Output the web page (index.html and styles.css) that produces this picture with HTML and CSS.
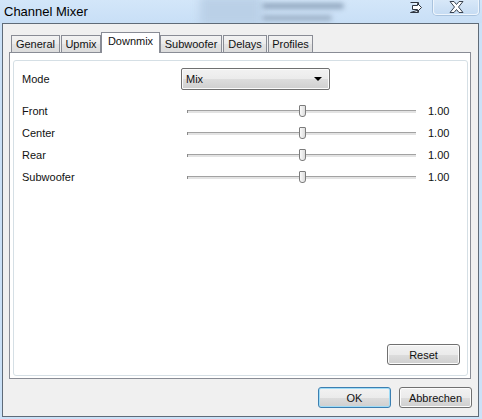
FILE: index.html
```html
<!DOCTYPE html>
<html lang="de">
<head>
    <meta charset="UTF-8">
    <meta name="viewport" content="width=device-width, initial-scale=1.0">
    <title>Channel Mixer</title>
    <link rel="stylesheet" href="styles.css">
</head>
<body>

<div class="window">
    <!-- Titelleiste -->
    <div class="titlebar">
        <span class="title">Channel Mixer</span>
        <div class="haze-box"></div>
        <div class="haze-lines">
            <div class="haze-line one"></div>
            <div class="haze-line two"></div>
        </div>
        <div class="haze-right"></div>
        <svg class="pin-icon" width="13" height="11" viewBox="0 0 13 11">
            <path d="M0.5 0.5 H8.5 V3 M8.5 8 V10.5 H0.5 Z" fill="#f4f8fc" stroke="#2d3540" stroke-width="1"/>
            <path d="M2.5 3.5 H7.5 V1.5 L11.5 5.5 L7.5 9.5 V7.5 H2.5 Z" fill="#ffffff" stroke="#2d3540" stroke-width="1" stroke-linejoin="miter"/>
        </svg>
        <div class="close-btn">
            <svg width="15" height="12" viewBox="0 0 15 12">
                <path d="M1 0.5 H5 L7.5 3.5 L10 0.5 H14 L9.5 6 L14 11.5 H10 L7.5 8.5 L5 11.5 H1 L5.5 6 Z" fill="#ffffff" stroke="#3a4350" stroke-width="1" stroke-linejoin="round"/>
            </svg>
        </div>
    </div>

    <!-- Dialoginhalt -->
    <div class="client">
        <div class="tabs">
            <div class="tab w-general">General</div>
            <div class="tab w-upmix">Upmix</div>
            <div class="tab active w-downmix">Downmix</div>
            <div class="tab w-sub">Subwoofer</div>
            <div class="tab w-delays">Delays</div>
            <div class="tab w-profiles">Profiles</div>
        </div>

        <div class="panel">
            <div class="group">
                <div class="mode-row">
                    <span class="mode-label">Mode</span>
                    <div class="select">
                        <span>Mix</span>
                        <span class="arrow"></span>
                    </div>
                </div>

                <div class="sliders">
                    <div class="slider-row">
                        <span class="slider-label">Front</span>
                        <div class="slider"><div class="track"></div><div class="thumb"></div><div class="track"></div></div>
                        <span class="value">1.00</span>
                    </div>
                    <div class="slider-row">
                        <span class="slider-label">Center</span>
                        <div class="slider"><div class="track"></div><div class="thumb"></div><div class="track"></div></div>
                        <span class="value">1.00</span>
                    </div>
                    <div class="slider-row">
                        <span class="slider-label">Rear</span>
                        <div class="slider"><div class="track"></div><div class="thumb"></div><div class="track"></div></div>
                        <span class="value">1.00</span>
                    </div>
                    <div class="slider-row">
                        <span class="slider-label">Subwoofer</span>
                        <div class="slider"><div class="track"></div><div class="thumb"></div><div class="track"></div></div>
                        <span class="value">1.00</span>
                    </div>
                </div>

                <button class="btn reset-btn">Reset</button>
            </div>
        </div>

        <div class="buttons">
            <button class="btn default">OK</button>
            <button class="btn">Abbrechen</button>
        </div>
    </div>
</div>

</body>
</html>
```

FILE: styles.css
```css
body {
    margin: 0;
    width: 482px;
    height: 419px;
    overflow: hidden;
    background-color: #cbe1f7;
    color: #111;
    font-family: "Liberation Sans", Arial, sans-serif;
    font-size: 11px;
}
.window {
    height: 419px;
    display: flex;
    flex-direction: column;
}

/* Titelleiste */
.titlebar {
    height: 23px;
    display: flex;
    align-items: flex-start;
    padding-left: 4px;
    overflow: hidden;
    background: linear-gradient(#d3e6f9, #c8dff6);
}
.title {
    width: 196px;
    font-size: 13px;
    line-height: 13px;
    margin-top: 5px;
    white-space: nowrap;
    color: #000;
}
.haze-box {
    width: 62px;
    height: 30px;
    margin-top: -4px;
    background-color: #bad0e7;
    filter: blur(4px);
}
.haze-lines {
    width: 90px;
    padding-top: 3px;
}
.haze-line {
    height: 6px;
    background-color: #93a8c0;
    filter: blur(2.5px);
    border-radius: 3px;
}
.haze-line.one {
    width: 82px;
}
.haze-line.two {
    width: 70px;
    margin-top: 6px;
    background-color: #9fb3c9;
}
.haze-right {
    flex: 1;
}
.pin-icon {
    margin-top: 2px;
    margin-right: 10px;
}
.close-btn {
    width: 44px;
    height: 14px;
    margin-right: 3px;
    border: 1px solid #eef5fc;
    border-top: none;
    border-radius: 0 0 4px 4px;
    box-shadow: 0 0 0 1px #a9c3de;
    background: linear-gradient(#d8e8f8, #c6dcf3);
    display: flex;
    justify-content: center;
    align-items: center;
}

/* Client-Bereich */
.client {
    flex: 1;
    margin: 0 3px 2px 2px;
    border: 1px solid #5f6b78;
    background-color: #f0f0f0;
    display: flex;
    flex-direction: column;
}
.tabs {
    display: flex;
    align-items: flex-end;
    height: 21px;
    margin: 8px 0 -1px 8px;
    position: relative;
    z-index: 1;
}
.tab {
    box-sizing: border-box;
    height: 18px;
    line-height: 16px;
    text-align: center;
    border: 1px solid #898c95;
    margin-right: 1px;
    background: linear-gradient(#f3f3f3, #ebebeb 50%, #e3e3e3 51%, #dcdcdc);
}
.tab.active {
    height: 21px;
    line-height: 17px;
    background: #fff;
    border-bottom: none;
    margin: 0 -1px 0 -1px;
    padding-bottom: 2px;
}
.w-general { width: 49px; }
.w-upmix { width: 40px; }
.w-downmix { width: 59px; }
.w-sub { width: 62px; margin-left: 1px; }
.w-delays { width: 44px; }
.w-profiles { width: 45px; }

.panel {
    flex: 1;
    margin: 0 7px 0 6px;
    border: 1px solid #898c95;
    background-color: #fff;
    display: flex;
    padding: 7px 2px 2px 3px;
}
.group {
    flex: 1;
    border: 1px solid #d5dfe5;
    border-radius: 3px;
    display: flex;
    flex-direction: column;
    padding: 7px 0 0 8px;
}
.mode-row {
    display: flex;
    align-items: center;
    height: 22px;
}
.mode-label {
    width: 159px;
}
.select {
    width: 149px;
    height: 22px;
    box-sizing: border-box;
    border: 1px solid #707070;
    border-radius: 2px;
    background: linear-gradient(#f2f2f2, #ebebeb 50%, #dddddd 51%, #cfcfcf);
    box-shadow: inset 0 0 0 1px #fbfbfb;
    display: flex;
    align-items: center;
    justify-content: space-between;
    padding: 0 7px 0 4px;
}
.arrow {
    width: 0;
    height: 0;
    border-left: 4px solid transparent;
    border-right: 4px solid transparent;
    border-top: 4px solid #000;
}

.sliders {
    margin-top: 10px;
}
.slider-row {
    display: flex;
    align-items: center;
    height: 22px;
}
.slider-label {
    width: 165px;
}
.slider {
    width: 229px;
    display: flex;
    align-items: center;
}
.track {
    flex: 1;
    height: 3px;
    background: linear-gradient(#a2a2a2 0 1px, #e3e3e3 1px);
}
.track:first-child {
    border-left: 1px solid #8a8a8a;
}
.thumb {
    width: 5px;
    height: 10px;
    border: 1px solid #7c7c7c;
    border-radius: 1px 1px 3px 3px;
    background: linear-gradient(to right, #fafafa, #dcdcdc);
}
.value {
    width: 20px;
    margin-left: 12px;
    text-align: right;
}

.btn {
    width: 73px;
    height: 21px;
    padding: 0;
    font: inherit;
    color: #111;
    border: 1px solid #707070;
    border-radius: 3px;
    background: linear-gradient(#f2f2f2, #ebebeb 50%, #dddddd 51%, #cfcfcf);
    box-shadow: inset 0 0 0 1px #fcfcfc;
}
.btn.default {
    border-color: #3c7fb1;
    box-shadow: inset 0 0 0 1px #9fdcf7;
}
.reset-btn {
    margin-top: auto;
    align-self: flex-end;
    margin-right: 7px;
    margin-bottom: 10px;
}
.buttons {
    display: flex;
    justify-content: flex-end;
    gap: 8px;
    margin: 8px 6px 8px 0;
}
```
